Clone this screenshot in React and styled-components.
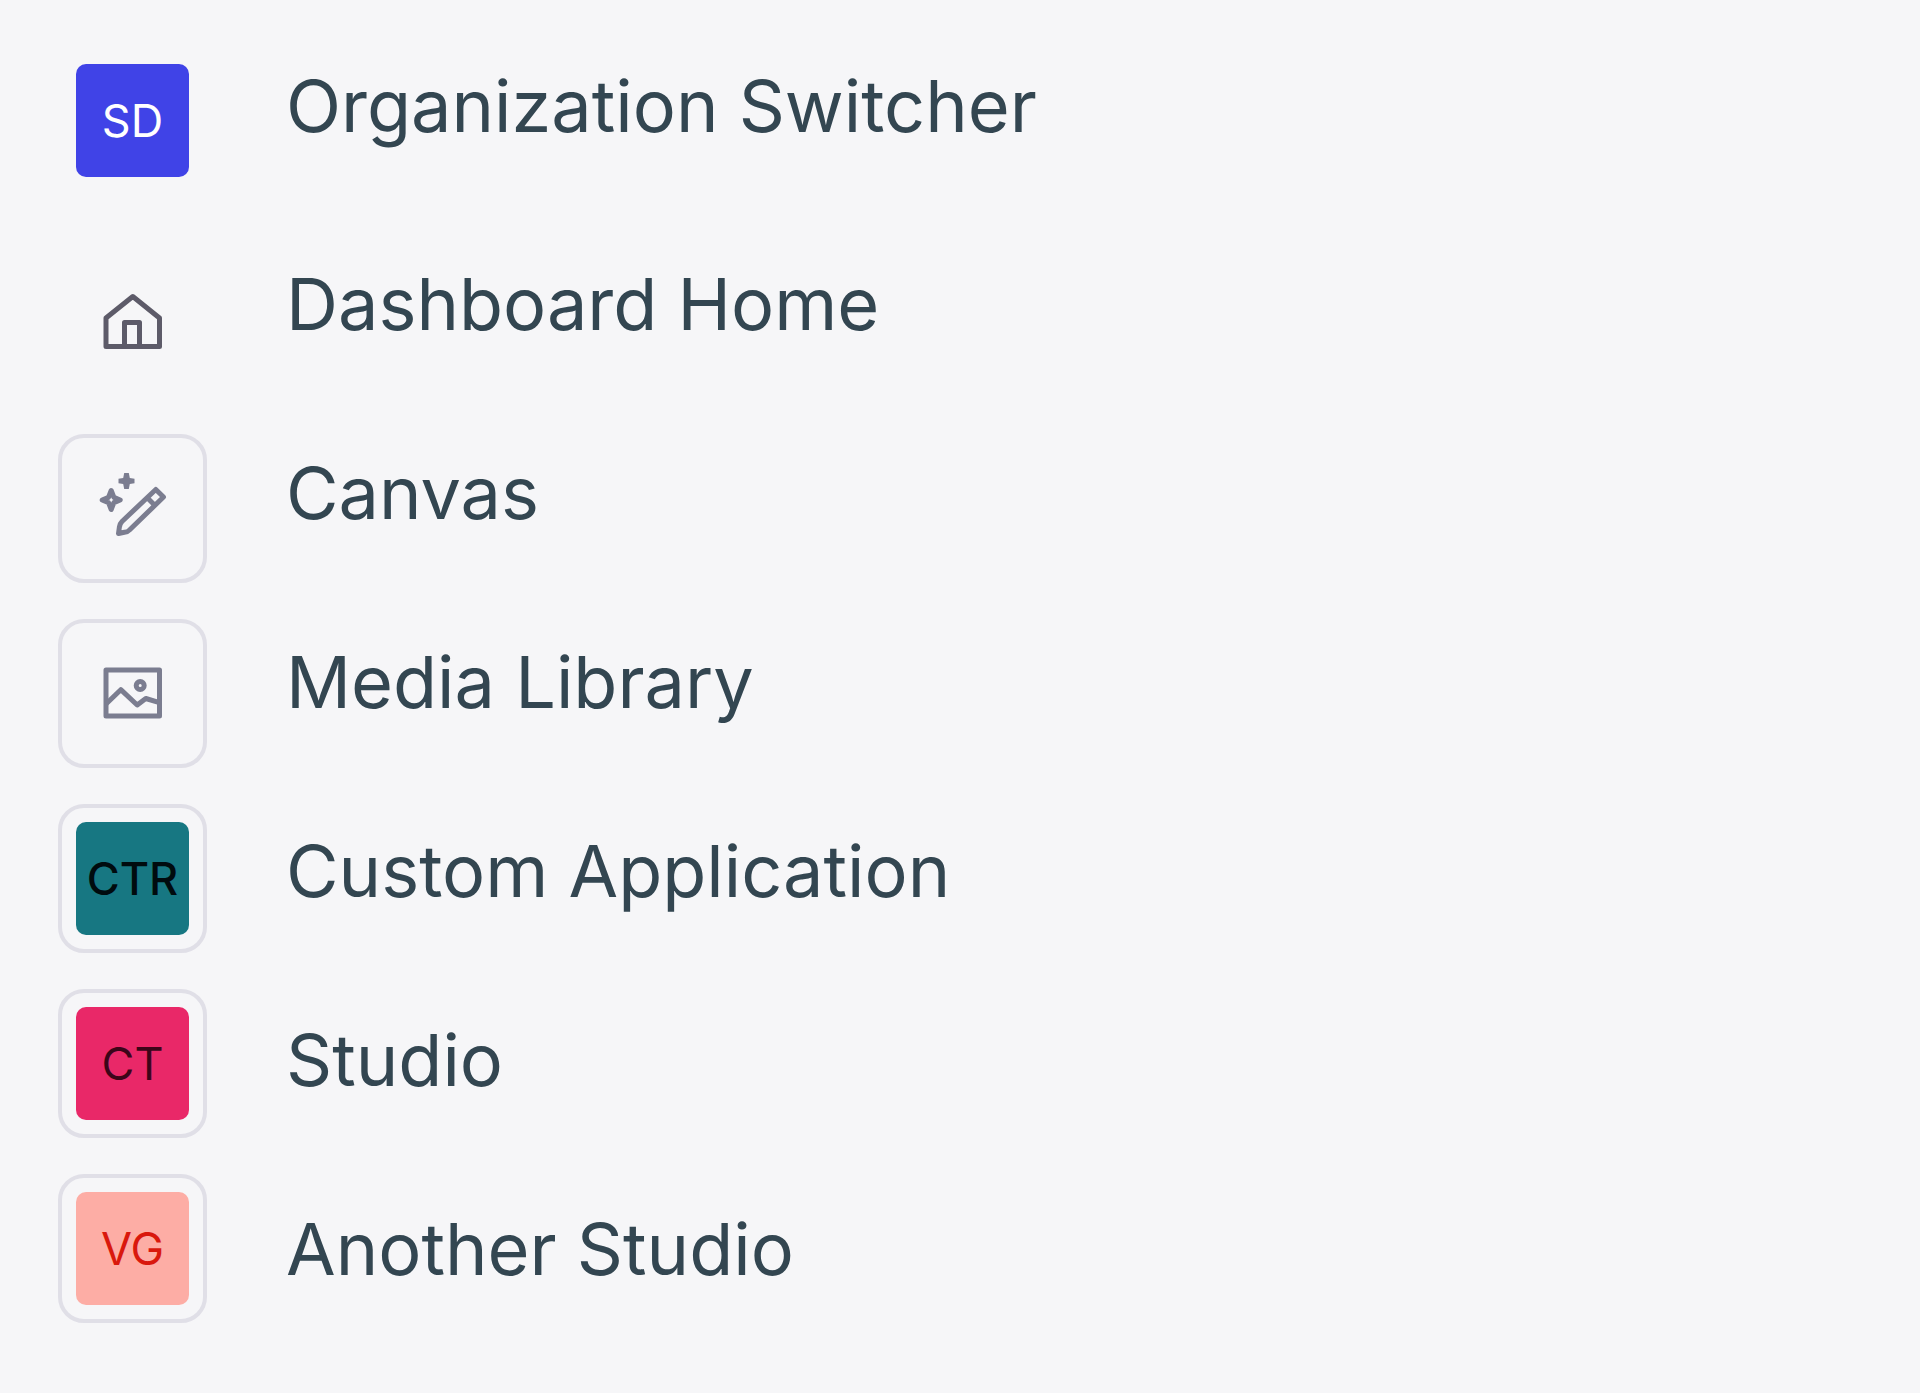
import React from "react";
import styled, { createGlobalStyle } from "styled-components";

const GlobalStyle = createGlobalStyle`
  * {
    box-sizing: border-box;
  }
  body {
    margin: 0;
    background-color: #f6f6f8;
    font-family: Inter, "Liberation Sans", sans-serif;
  }
`;
const Page = styled.main`
  display: flex;
  align-items: flex-start;
  gap: 79px;
  min-height: 100vh;
  padding: 46px 58px;
`;
const Rail = styled.nav`
  display: flex;
  flex-direction: column;
  gap: 54px;
`;
const Apps = styled.div`
  display: flex;
  flex-direction: column;
  gap: 36px;
`;
const Tile = styled.button`
  display: flex;
  align-items: center;
  justify-content: center;
  width: 149px;
  height: 149px;
  padding: 0;
  border: 4px solid ${({ $outlined }) => ($outlined ? "#e0dfe7" : "transparent")};
  border-radius: 26px;
  background: none;
  color: ${({ $muted }) => ($muted ? "#7b7d90" : "#5d5b69")};
  font-family: inherit;
  cursor: pointer;
`;
const Avatar = styled.span`
  display: flex;
  align-items: center;
  justify-content: center;
  width: 113px;
  height: 113px;
  border-radius: 10px;
  background-color: ${({ $bg }) => $bg};
  color: ${({ $color }) => $color};
  font-size: 45px;
  font-weight: ${({ $weight }) => $weight || 400};
  line-height: 55px;
`;
const Icon = styled.svg`
  width: 80px;
  height: 80px;
  fill: none;
  stroke: currentColor;
  stroke-width: 5;
  stroke-linejoin: round;
`;
const Names = styled.div`
  display: flex;
  flex: 1;
  flex-direction: column;
  gap: 110px;
  padding-top: 16px;
`;
const List = styled.ul`
  display: flex;
  flex-direction: column;
  gap: 101px;
  margin: 0;
  padding: 0;
  list-style: none;
`;
const Name = styled.div`
  color: #334651;
  font-size: 72px;
  font-weight: 400;
  line-height: 88px;
  white-space: nowrap;
`;

const HomeIcon = () => (
  <Icon viewBox="0 0 80 80" aria-hidden="true">
    <path d="M13 34 39.8 12.5 66.5 34V62.5H13Z" />
    <path d="M31.5 62.5V38.5H46.5V62.5" />
  </Icon>
);
const CanvasIcon = () => (
  <Icon viewBox="0 0 80 80" aria-hidden="true">
    <path d="M62.8 20.5 70.5 28 36.5 61Q35 62.8 31.5 63.3L25.5 64.5 26.4 58Q27 54.5 29 52.5Z" />
    <path d="M54 28.5 62.5 37" />
    <path
      d="M18.2 21.5 20.9 28.4 27.2 31 20.9 33.6 18.2 40.5 15.5 33.6 9.2 31 15.5 28.4Z"
    />
    <path
      fill="currentColor"
      stroke="none"
      d="M31.2 4H35.8L36.8 9 41.5 9.7V14.3L36.8 15 35.8 20H31.2L30.2 15 25.5 14.3V9.7L30.2 9Z"
    />
  </Icon>
);
const MediaIcon = () => (
  <Icon viewBox="0 0 80 80" aria-hidden="true">
    <path d="M13 16H66.5V62H13Z" />
    <path d="M13 50 27.8 35.7 44.2 51 52.8 44.5 66.5 48.7" />
    <circle cx="47.2" cy="31.5" r="4" />
  </Icon>
);

const apps = [
  { name: "Dashboard Home", icon: <HomeIcon />, plain: true },
  { name: "Canvas", icon: <CanvasIcon /> },
  { name: "Media Library", icon: <MediaIcon /> },
  { name: "Custom Application", initials: "CTR", bg: "#177782", color: "#000b0e", weight: 500 },
  { name: "Studio", initials: "CT", bg: "#e92868", color: "#3c0519" },
  { name: "Another Studio", initials: "VG", bg: "#fdada5", color: "#d9180d" },
];

export default function App() {
  return (
    <>
      <GlobalStyle />
      <Page>
        <Rail>
          <Tile type="button" aria-labelledby="organization">
            <Avatar $bg="#4043e7" $color="#fff">
              SD
            </Avatar>
          </Tile>
          <Apps>
            {apps.map((app, i) => (
              <Tile
                key={app.name}
                type="button"
                aria-labelledby={`app-${i}`}
                $outlined={!app.plain}
                $muted={!app.plain}
              >
                {app.icon || (
                  <Avatar $bg={app.bg} $color={app.color} $weight={app.weight}>
                    {app.initials}
                  </Avatar>
                )}
              </Tile>
            ))}
          </Apps>
        </Rail>
        <Names>
          <Name id="organization">Organization Switcher</Name>
          <List>
            {apps.map((app, i) => (
              <Name as="li" key={app.name} id={`app-${i}`}>
                {app.name}
              </Name>
            ))}
          </List>
        </Names>
      </Page>
    </>
  );
}
